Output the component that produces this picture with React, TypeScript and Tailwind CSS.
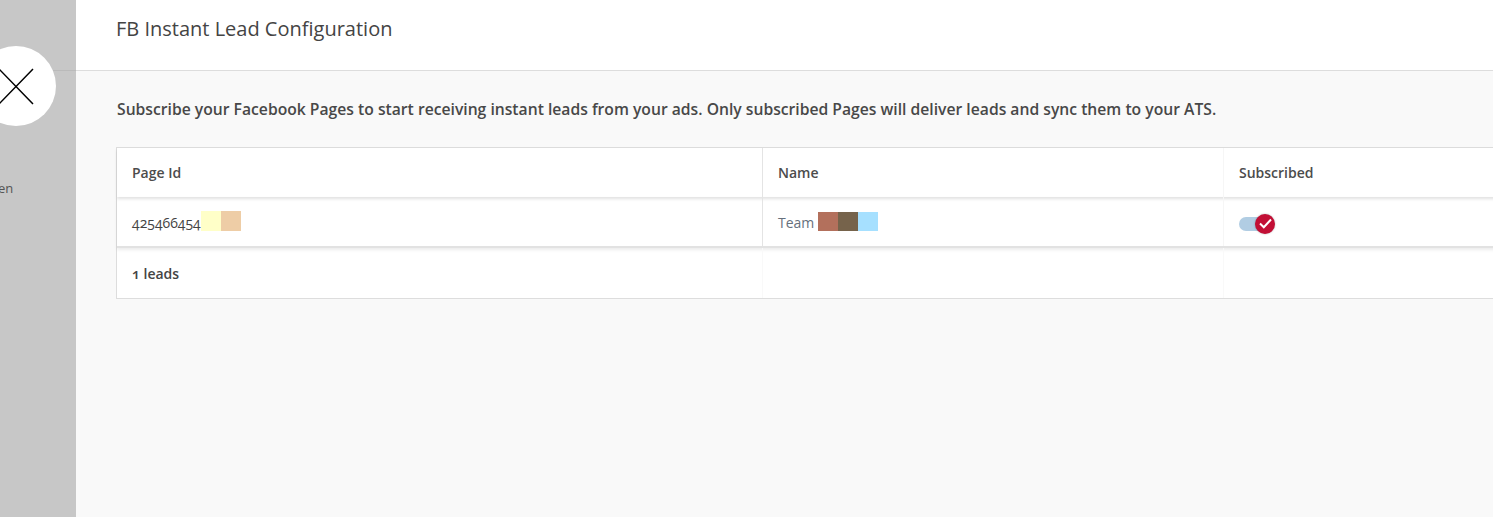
export default function App() {
  return (
    <div className="relative flex h-[517px] w-[1493px] overflow-hidden bg-[#f9f9f9] font-['Open_Sans',sans-serif] text-[#444444]">
      {/* Left panel */}
      <div className="relative w-[76px] shrink-0 bg-[#c7c7c7]">
        <div className="absolute left-[52px] right-0 top-[70px] h-px bg-[#bababa]" />
        <div className="absolute left-[-24px] top-[46px] flex h-[80px] w-[80px] items-center justify-center rounded-full bg-white">
          <svg width="36" height="37" viewBox="0 0 36 37" className="text-black">
            <path d="M1 1L35 36M35 1L1 36" stroke="currentColor" strokeWidth="1.5" fill="none" />
          </svg>
        </div>
        <span className="absolute left-[-2px] top-[179px] text-[13px] text-[#555555]">en</span>
      </div>

      {/* Main */}
      <div className="min-w-0 flex-1">
        <div className="flex h-[71px] items-start border-b border-[#dddddd] bg-white pl-[40px] pt-[15px]">
          <h1 className="text-[20px] leading-[28px]">FB Instant Lead Configuration</h1>
        </div>

        <div className="pl-[40px]">
          <p className="pl-[1px] pt-[27px] text-[15.7px] font-semibold leading-[22px] text-[#484848]">
            Subscribe your Facebook Pages to start receiving instant leads from your ads. Only subscribed Pages will deliver leads and sync them to your ATS.
          </p>

          <div className="mt-[27px] w-[1400px] border border-[#dddddd] bg-white text-[14px]">
            {/* Header */}
            <div className="flex h-[49px] font-semibold text-[#4c4c4c] shadow-[0_2px_3px_rgba(0,0,0,0.12)]">
              <div className="flex w-[646px] items-center border-r border-[#e4e4e4] pl-[15px]">Page Id</div>
              <div className="flex w-[461px] items-center border-r border-[#f6f6f6] pl-[15px]">Name</div>
              <div className="flex flex-1 items-center pl-[15px]">Subscribed</div>
            </div>
            {/* Row */}
            <div className="flex h-[51px] border-b-[2px] border-[#e2e2e2] shadow-[0_2px_3px_rgba(0,0,0,0.08)]">
              <div className="flex w-[646px] items-center border-r border-[#e4e4e4] pl-[15px]">
                <span className="mt-[2px] w-[69px] [font-variant-numeric:oldstyle-nums]">425466454</span>
                <span className="mb-[2px] h-[20px] w-[20px] bg-[#ffffc8]" />
                <span className="mb-[2px] h-[20px] w-[20px] bg-[#eecda6]" />
              </div>
              <div className="flex w-[461px] items-center border-r border-[#f6f6f6] pl-[15px]">
                <span className="mt-[2px] w-[40px] text-[#66707c]">Team</span>
                <span className="mb-[1px] h-[19px] w-[20px] bg-[#b3705c]" />
                <span className="mb-[1px] h-[19px] w-[20px] bg-[#76634b]" />
                <span className="mb-[1px] h-[19px] w-[20px] bg-[#a6e0ff]" />
              </div>
              <div className="flex flex-1 items-center pl-[15px]">
                <div className="relative mt-[4px] h-[14px] w-[26px] rounded-full bg-[#b1cde3]">
                  <span className="absolute left-[16px] top-[-3px] flex h-[20px] w-[20px] items-center justify-center rounded-full bg-[#c20f35] shadow-[0_0_2px_rgba(0,0,0,0.3)]">
                    <svg width="13" height="11" viewBox="0 0 13 11">
                      <path d="M1 5.5L4.8 9.2L12 1.5" stroke="white" strokeWidth="2" fill="none" />
                    </svg>
                  </span>
                </div>
              </div>
            </div>
            {/* Footer */}
            <div className="flex h-[50px]">
              <div className="flex w-[646px] items-center border-r border-[#f9f9f9] pl-[15px] font-semibold [font-variant-numeric:oldstyle-nums]">1 leads</div>
              <div className="w-[461px] border-r border-[#f9f9f9]" />
              <div className="flex-1" />
            </div>
          </div>
        </div>
      </div>
    </div>
  );
}
